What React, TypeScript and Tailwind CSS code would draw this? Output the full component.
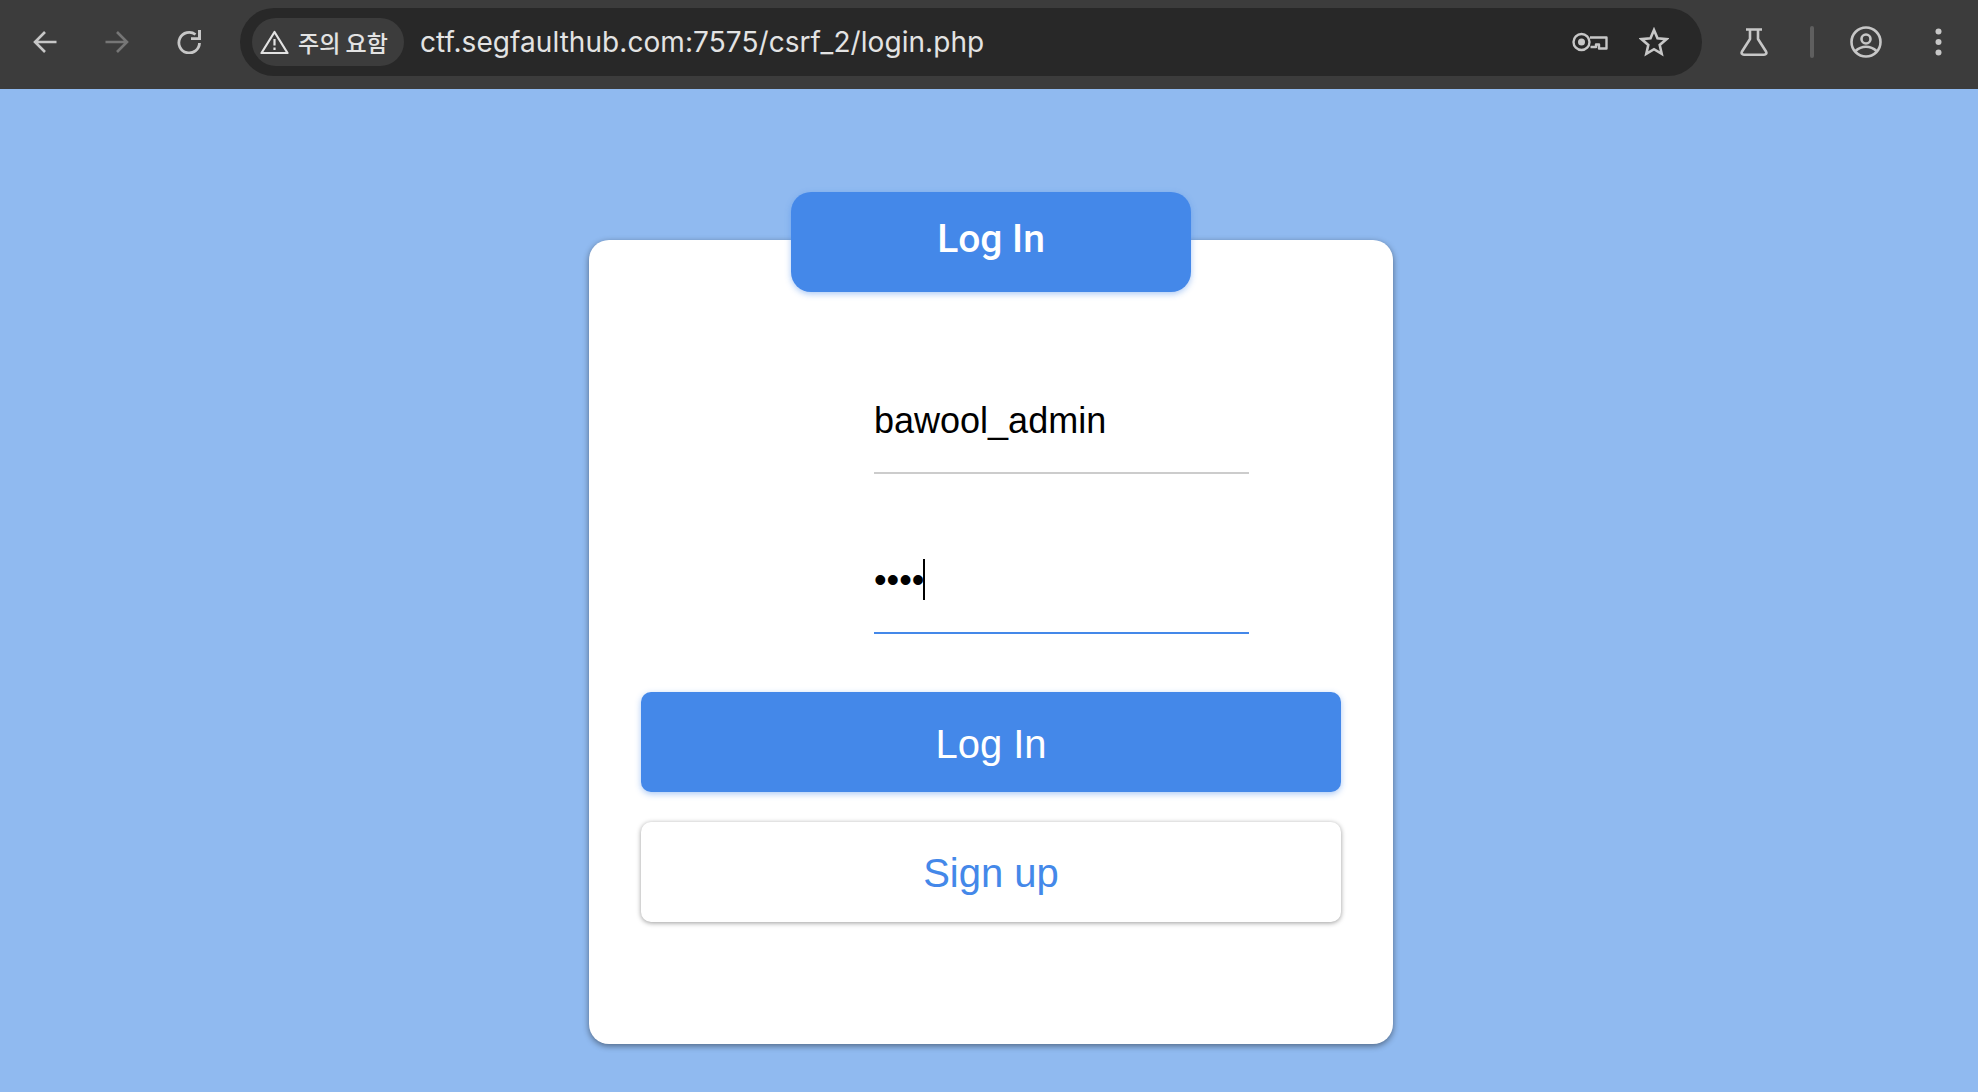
import React from 'react';

const BackIcon = () => (
  <svg width="24" height="24" viewBox="0 0 24 24" fill="none" stroke="#c7c7c7" strokeWidth="2.6">
    <path d="M23.500 12H2.500M12 2 2 12l10 10" />
  </svg>
);

const ForwardIcon = () => (
  <svg width="24" height="24" viewBox="0 0 24 24" fill="none" stroke="#767676" strokeWidth="2.6">
    <path d="M.5 12h21M12 2l10 10-10 10" />
  </svg>
);

const ReloadIcon = () => (
  <svg width="24" height="24" viewBox="0 0 24 24" fill="none">
    <path d="M22.500 13A10.300 10.300 0 1 1 18.500 4.500" stroke="#c7c7c7" strokeWidth="2.8" />
    <path d="M24 0v10H14V7.200h7V0Z" fill="#c7c7c7" />
  </svg>
);

const WarnIcon = () => (
  <svg width="29" height="24" viewBox="0 0 29 24" fill="none" stroke="#e3e3e3" strokeWidth="2.2">
    <path d="M14.500 2 27.500 23H1.500Z" strokeLinejoin="round" />
    <path d="M14.500 9v6.500M14.500 17.500v2.500" />
  </svg>
);

const KeyIcon = () => (
  <svg width="36" height="20" viewBox="0 0 36 20" fill="none" stroke="#c7c7c7" strokeWidth="2.4">
    <path d="M18 5.500h16.500v11H27v-4h-3v2.500h-5.500" strokeLinejoin="round" />
    <circle cx="9.500" cy="10" r="8" />
    <circle cx="9.500" cy="10" r="3.500" fill="#c7c7c7" stroke="none" />
  </svg>
);

const StarIcon = () => (
  <svg width="30" height="30" viewBox="0 0 30 30" fill="none" stroke="#c7c7c7" strokeWidth="2.600">
    <path d="m15 3 3.500 8.300 9 .8-6.800 5.900 2 8.800-7.700-4.600-7.700 4.600 2-8.800L2.500 12.100l9-.8Z" />
  </svg>
);

const FlaskIcon = () => (
  <svg width="28" height="28" viewBox="0 0 28 28" fill="none" stroke="#c7c7c7" strokeWidth="2.600">
    <path d="M6 1.500h16M10 1.500v9.500L2 23.500c-1 2 0 3.200 2 3.200h20c2 0 3-1.200 2-3.200L18 11V1.500" strokeLinejoin="round" />
  </svg>
);

const ProfileIcon = () => (
  <svg width="32" height="32" viewBox="0 0 32 32" fill="none" stroke="#c7c7c7" strokeWidth="2.600">
    <circle cx="16" cy="16" r="14.500" />
    <circle cx="16" cy="13" r="4.500" />
    <path d="M5.500 25c3-2.800 6.500-4.200 10.500-4.200S23.500 22.200 26.500 25" />
  </svg>
);

const MoreIcon = () => (
  <svg width="7" height="28" viewBox="0 0 7 28" fill="#c7c7c7">
    <circle cx="3.500" cy="3.500" r="3" />
    <circle cx="3.500" cy="14" r="3" />
    <circle cx="3.500" cy="24.500" r="3" />
  </svg>
);

const App: React.FC = () => {
  return (
    <div className="w-[1978px] h-[1092px] overflow-hidden bg-[#90baf0] font-['Liberation_Sans',sans-serif]">
      {/* Browser toolbar */}
      <header className="h-[89px] bg-[#3c3c3c] flex items-start pt-[8px]">
        <div className="w-[240px] h-[68px] shrink-0 flex items-center pl-[33px] gap-[48px]">
          <BackIcon />
          <ForwardIcon />
          <ReloadIcon />
        </div>
        <div className="w-[1462px] h-[68px] rounded-[34px] bg-[#282828] flex items-center pl-[12px] pr-[33px]">
          <div className="w-[152px] h-[48px] rounded-[24px] bg-[#3c3c3c] flex items-center pl-[8px] gap-[9px]">
            <WarnIcon />
            <span className="text-[23px] font-medium text-[#e3e3e3] whitespace-nowrap font-['Noto_Sans_CJK_KR',sans-serif]">주의 요함</span>
          </div>
          <span className="ml-[16px] text-[28px] tracking-[0.06px] text-[#e3e3e3] font-['Inter',sans-serif]">ctf.segfaulthub.com:7575/csrf_2/login.php</span>
          <div className="ml-auto flex items-center gap-[31px]">
            <KeyIcon />
            <StarIcon />
          </div>
        </div>
        <div className="h-[68px] ml-[38px] flex items-center">
          <FlaskIcon />
          <div className="ml-[42px] w-[4px] h-[32px] rounded-full bg-[#5f5f5f]" />
          <div className="ml-[36px]"><ProfileIcon /></div>
          <div className="ml-[53px]"><MoreIcon /></div>
        </div>
      </header>

      {/* Login card */}
      <main className="flex justify-center pt-[151px]">
        <div className="relative w-[804px] h-[804px] ml-[4px] bg-white rounded-[20px] shadow-[0_2px_6px_rgba(0,0,0,0.45)] px-[52px] pt-[128px]">
          <div className="absolute left-[202px] top-[-48px] w-[400px] h-[100px] rounded-[20px] bg-[#4488e9] shadow-[0_2px_6px_rgba(68,136,233,0.45)] flex items-center justify-center pb-[5px] text-[39px] font-medium text-white font-['Roboto',sans-serif]">
            Log In
          </div>

          <div className="ml-[233px] w-[375px] h-[106px] border-b-2 border-[#cccccc] flex items-center text-[36px] text-black pt-[1px]">
            bawool_admin
          </div>
          <div className="ml-[233px] mt-[52px] w-[375px] h-[108px] border-b-2 border-[#4488e9] flex items-center text-black pt-[1px]">
            <span className="text-[36px] leading-none">••••</span>
            <span className="w-[2px] h-[41px] -ml-[1px] bg-black" />
          </div>

          <button className="mt-[58px] block w-[700px] h-[100px] rounded-[10px] bg-[#4488e9] text-white text-[40px] pt-[3px] shadow-[0_2px_6px_rgba(68,136,233,0.45)]">
            Log In
          </button>
          <button className="mt-[30px] block w-[700px] h-[100px] rounded-[10px] bg-white text-[#4488e9] text-[40px] pt-[1px] shadow-[0_1px_5px_rgba(0,0,0,0.4)]">
            Sign up
          </button>
        </div>
      </main>
    </div>
  );
};

export default App;
